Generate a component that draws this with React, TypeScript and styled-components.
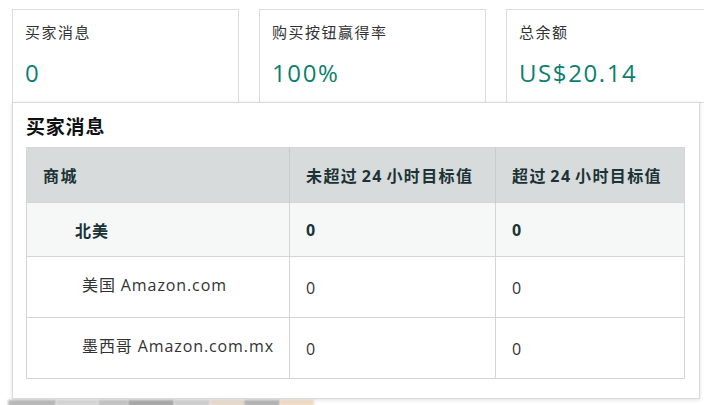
import React from 'react';
import styled, { createGlobalStyle } from 'styled-components';

const GlobalStyle = createGlobalStyle`
  html, body {
    margin: 0;
    padding: 0;
    background: #fff;
    overflow: hidden;
  }
  body {
    font-family: "Open Sans", "Noto Sans CJK SC", sans-serif;
    color: #0f1111;
  }
`;

const Page = styled.div`
  position: relative;
  width: 704px;
  height: 405px;
  overflow: hidden;
`;

const CardRow = styled.div`
  display: flex;
  gap: 20px;
  padding: 9px 0 0 12px;
  width: max-content;
`;

const Card = styled.div`
  box-sizing: border-box;
  width: 227px;
  height: 94px;
  border: 1px solid #dcdcdc;
  padding: 11px 12px 0;
  display: flex;
  flex-direction: column;
  gap: 13px;
  &.wide { width: 240px; }
`;

const CardLabel = styled.div`
  font-size: 15px;
  letter-spacing: 1.5px;
  color: #333;
  line-height: 22px;
`;

const CardValue = styled.div`
  font-size: 24px;
  letter-spacing: 1.6px;
  line-height: 34px;
  color: #0c7f6f;
`;

const Strip = styled.div`
  display: flex;
  margin-top: 297px;
  padding-left: 8px;
  height: 8px;
`;

const StripPiece = styled.div<{ $w: number; $c: string }>`
  width: ${p => p.$w}px;
  background: ${p => p.$c};
  filter: blur(1px);
`;

const Popover = styled.div`
  position: absolute;
  left: 12px;
  top: 102px;
  box-sizing: border-box;
  width: 688px;
  height: 297px;
  background: #fff;
  border: 1px solid #d9d9d9;
  box-shadow: 0 1px 4px rgba(0, 0, 0, 0.12);
  padding: 12px 15px 0 13px;
`;

const Title = styled.h3`
  margin: 0 0 8px;
  font-size: 19px;
  letter-spacing: 0.8px;
  line-height: 24px;
  font-weight: 700;
  color: #0f1111;
`;

const Table = styled.table`
  width: 658px;
  table-layout: fixed;
  border-collapse: collapse;
  border: 1px solid #d5d5d5;
  font-size: 16px;
  letter-spacing: 0.9px;
  color: #333;
  white-space: nowrap;
`;

const HeadCell = styled.th<{ $w: number }>`
  width: ${p => p.$w}px;
  height: 55px;
  box-sizing: border-box;
  background: #d8dbdb;
  color: #1b3336;
  font-weight: 700;
  letter-spacing: 1.4px;
  word-spacing: -2px;
  text-align: left;
  padding: 0 2px 0 16px;
  border-right: 1px solid #c9cccc;
  &:last-child { border-right: none; }
`;

const Row = styled.tr<{ $region?: boolean }>`
  background: ${p => (p.$region ? '#f6f8f8' : '#fff')};
  border-top: 1px solid #d5d5d5;
  font-weight: ${p => (p.$region ? 700 : 400)};
  color: ${p => (p.$region ? '#1b3336' : '#333')};
  height: ${p => (p.$region ? 54 : 61)}px;
`;

const Cell = styled.td<{ $indent?: number; $lift?: number }>`
  padding: 0 2px ${p => p.$lift ?? 0}px ${p => 16 + (p.$indent ?? 0)}px;
  border-right: 1px solid #d5d5d5;
  vertical-align: middle;
  overflow: hidden;
  &:last-child { border-right: none; }
`;

const Num = styled.span<{ $drop?: number }>`
  position: relative;
  top: ${p => p.$drop ?? 0}px;
`;

const cards = [
  { label: '买家消息', value: '0' },
  { label: '购买按钮赢得率', value: '100%' },
  { label: '总余额', value: 'US$20.14', wide: true },
];

const rows = [
  { name: '北美', indent: 32, region: true, a: '0', b: '0', lift: 0, drop: 0 },
  { name: '美国 Amazon.com', indent: 39, a: '0', b: '0', lift: 6, drop: 4 },
  { name: '墨西哥 Amazon.com.mx', indent: 39, a: '0', b: '0', lift: 6, drop: 4 },
];

const strip: [number, string][] = [
  [48, '#b9b9b9'], [42, '#d6d6d6'], [30, '#c4c4c4'], [46, '#a9a9a9'],
  [36, '#cfcfcf'], [34, '#e7d9cc'], [36, '#b5b5b5'], [34, '#f1dcc6'],
];

export default function App() {
  return (
    <Page>
      <GlobalStyle />
      <CardRow>
        {cards.map(c => (
          <Card key={c.label} className={c.wide ? 'wide' : undefined}>
            <CardLabel>{c.label}</CardLabel>
            <CardValue>{c.value}</CardValue>
          </Card>
        ))}
      </CardRow>
      <Strip>
        {strip.map(([w, c], i) => (
          <StripPiece key={i} $w={w} $c={c} />
        ))}
      </Strip>
      <Popover>
        <Title>买家消息</Title>
        <Table>
          <thead>
            <tr>
              <HeadCell $w={263}>商城</HeadCell>
              <HeadCell $w={206}>未超过 24 小时目标值</HeadCell>
              <HeadCell $w={189}>超过 24 小时目标值</HeadCell>
            </tr>
          </thead>
          <tbody>
            {rows.map(r => (
              <Row key={r.name} $region={r.region}>
                <Cell $indent={r.indent} $lift={r.lift}>{r.name}</Cell>
                <Cell $lift={r.lift}><Num $drop={r.drop}>{r.a}</Num></Cell>
                <Cell $lift={r.lift}><Num $drop={r.drop}>{r.b}</Num></Cell>
              </Row>
            ))}
          </tbody>
        </Table>
      </Popover>
    </Page>
  );
}
